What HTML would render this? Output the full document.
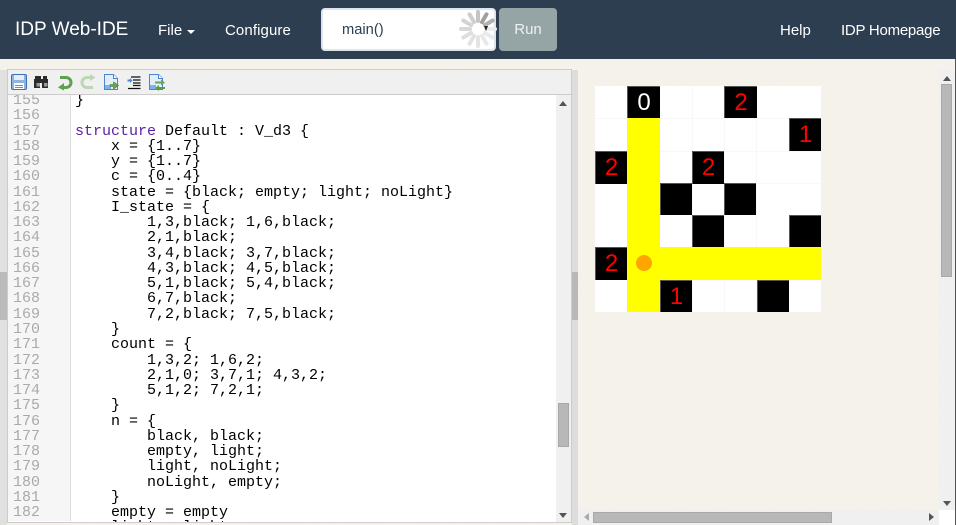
<!DOCTYPE html>
<html>
<head>
<meta charset="utf-8">
<style>
html,body{margin:0;padding:0;width:956px;height:525px;overflow:hidden;background:#f4f1ea;font-family:"Liberation Sans",sans-serif;}
.a{position:absolute;}
#nav{left:0;top:0;width:956px;height:59px;background:#2c3e50;}
.n{position:absolute;top:21px;color:#fff;font-size:15px;line-height:20px;white-space:nowrap;}
pre{margin:0;font-family:"Liberation Mono",monospace;font-size:15px;line-height:15.26px;}
.b{color:#000;}
.k{color:#5b1fa6;}
.c{position:absolute;width:33px;height:33px;box-sizing:border-box;}
.bk{background:#000;border-left:1px solid #555;border-top:1px solid #555;text-align:center;color:#f00;font-size:24px;line-height:31px;}
.y{background:#ff0;}
.th{background:#b8b8b8;border:1px solid #a9a9a9;box-sizing:border-box;}
</style>
</head>
<body>
<svg class="a" style="left:0;top:59px;" width="956" height="466">
<filter id="f" x="0" y="0" width="100%" height="100%"><feTurbulence type="fractalNoise" baseFrequency="0.55" numOctaves="2" seed="4"/><feColorMatrix type="matrix" values="0 0 0 0 0.88  0 0 0 0 0.86  0 0 0 0 0.80  1.6 0 0 0 -0.75"/></filter>
<rect width="956" height="466" fill="#f5f2eb"/>
<rect width="956" height="466" filter="url(#f)" opacity=".6"/>
</svg>

<div class="a" id="nav"></div>
<div class="n" style="left:15px;top:18px;font-size:19px;line-height:24px;">IDP Web-IDE</div>
<div class="n" style="left:158px;">File</div>
<div class="a" style="left:187px;top:30px;width:0;height:0;border-left:4px solid transparent;border-right:4px solid transparent;border-top:4px solid #fff;"></div>
<div class="n" style="left:225px;letter-spacing:.1px;">Configure</div>
<div class="n" style="left:780px;">Help</div>
<div class="n" style="left:841px;letter-spacing:-.25px;">IDP Homepage</div>

<div class="a" style="left:321px;top:8px;width:175px;height:43px;box-sizing:border-box;background:#fff;border:2px solid #dce4ec;border-radius:4px;"></div>
<div class="a" style="left:342px;top:20px;color:#2c3e50;font-size:14.7px;line-height:20px;">main()</div>
<svg class="a" style="left:458px;top:8.500px;" width="40" height="40" viewBox="-20 -20 40 40">
<g stroke-width="4" stroke-linecap="round">
<line x1="0" y1="-8" x2="0" y2="-17" stroke="#c4c4c4"/>
<line x1="4" y1="-6.9" x2="8.5" y2="-14.7" stroke="#a0a0a0"/>
<line x1="6.9" y1="-4" x2="14.7" y2="-8.500" stroke="#b0b0b0"/>
<line x1="8" y1="0" x2="17" y2="0" stroke="#ececec"/>
<line x1="6.9" y1="4" x2="14.7" y2="8.500" stroke="#eaeaea"/>
<line x1="4" y1="6.9" x2="8.5" y2="14.7" stroke="#e8e8e8"/>
<line x1="0" y1="8" x2="0" y2="17" stroke="#e4e4e4"/>
<line x1="-4" y1="6.9" x2="-8.5" y2="14.7" stroke="#e2e2e2"/>
<line x1="-6.9" y1="4" x2="-14.7" y2="8.500" stroke="#dedede"/>
<line x1="-8" y1="0" x2="-17" y2="0" stroke="#d8d8d8"/>
<line x1="-6.9" y1="-4" x2="-14.7" y2="-8.500" stroke="#d4d4d4"/>
<line x1="-4" y1="-6.9" x2="-8.5" y2="-14.7" stroke="#cecece"/>
</g>
</svg>
<div class="a" style="left:484px;top:26px;width:0;height:0;border-left:2.500px solid transparent;border-right:2.500px solid transparent;border-top:5px solid #222;"></div>
<div class="a" style="left:499px;top:8px;width:58px;height:43px;background:#95a5a6;border-radius:4px;color:#ecf0f1;font-size:15px;line-height:44px;text-align:center;">Run</div>

<!-- left splitter -->
<div class="a" style="left:0;top:70px;width:7px;height:455px;background:#e0e0e0;"></div>
<div class="a" style="left:0;top:272px;width:7px;height:48px;background:#bbb;"></div>

<!-- editor -->
<div class="a" style="left:7px;top:69px;width:565px;height:454px;box-sizing:border-box;background:#fff;border:1px solid #ccc;overflow:hidden;">
<div class="a" style="left:0;top:0;width:563px;height:24px;background:#f0f0f0;border-bottom:1px solid #ccc;"></div>
<div class="a" style="left:0;top:25px;width:63px;height:426px;background:#f6f6f6;border-right:1px solid #ddd;box-sizing:border-box;overflow:hidden;">
<div class="a" style="left:0;top:0;width:62px;height:425px;overflow:hidden;">
<pre class="a" style="left:5px;top:-2px;color:#aaa;">155
156
157
158
159
160
161
162
163
164
165
166
167
168
169
170
171
172
173
174
175
176
177
178
179
180
181
182</pre>
</div>
</div>
<div class="a" style="left:63px;top:25px;width:485px;height:427px;overflow:hidden;">
<pre class="a b" style="left:4px;top:-2px;">}

<span class="k">structure</span> Default : V_d3 {
    x = {1..7}
    y = {1..7}
    c = {0..4}
    state = {black; empty; light; noLight}
    I_state = {
        1,3,black; 1,6,black;
        2,1,black;
        3,4,black; 3,7,black;
        4,3,black; 4,5,black;
        5,1,black; 5,4,black;
        6,7,black;
        7,2,black; 7,5,black;
    }
    count = {
        1,3,2; 1,6,2;
        2,1,0; 3,7,1; 4,3,2;
        5,1,2; 7,2,1;
    }
    n = {
        black, black;
        empty, light;
        light, noLight;
        noLight, empty;
    }
    empty = empty
    light = light</pre>
</div>
<div class="a" style="left:548px;top:25px;width:15px;height:427px;background:#f0f0f0;"></div>
<div class="a th" style="left:550px;top:333px;width:11px;height:44px;"></div>
<div class="a" style="left:551px;top:31px;width:0;height:0;border-left:4px solid transparent;border-right:4px solid transparent;border-bottom:5px solid #555;"></div>
<div class="a" style="left:551px;top:443px;width:0;height:0;border-left:4px solid transparent;border-right:4px solid transparent;border-top:5px solid #555;"></div>
<!-- toolbar icons -->
<svg class="a" style="left:-1px;top:0;" width="170" height="24" viewBox="7 70 170 24">
<!-- save -->
<rect x="11.5" y="74.5" width="15" height="15" rx="1.5" fill="#8db4e0" stroke="#3d6fb5"/>
<rect x="14" y="75" width="10" height="5" fill="#e4eefb"/>
<rect x="14" y="83" width="10" height="6" fill="#fff"/>
<rect x="15" y="85" width="8" height="1" fill="#6aa84f"/>
<rect x="15" y="87" width="8" height="1" fill="#6aa84f"/>
<!-- binoculars -->
<path d="M37 76h4v3h2v-3h4v3h1v9h-6v-5h-2v5h-6v-9h1v-3h2z" fill="#2b2b2b"/>
<rect x="36.500" y="83" width="3.500" height="3.500" fill="#999"/>
<rect x="44" y="83" width="3.500" height="3.500" fill="#999"/>
<!-- undo -->
<path d="M60 77.500h6a5 5 0 0 1 0 10h-4" fill="none" stroke="#5da04e" stroke-width="3"/>
<path d="M64 83l-6 4.500 6 3z" fill="#5da04e"/>
<!-- redo -->
<path d="M93 77.500h-6a5 5 0 0 0 0 10h6" fill="none" stroke="#bcd6b6" stroke-width="3"/>
<path d="M90 74l5.500 3.500-5.500 3.500z" fill="#bcd6b6"/>
<!-- file arrow -->
<path d="M104.500 74.500h9l4 4v11h-13z" fill="#e4eefb" stroke="#4a86cf"/>
<path d="M113.500 74.500v4h4" fill="#fff" stroke="#4a86cf"/>
<rect x="105" y="85" width="6" height="4" fill="#7fb0ea"/>
<path d="M110 84.500h3.500v-2.500l5 3.500-5 3.500v-2.500h-3.500z" fill="#6aa84f" stroke="#3f7f2f" stroke-width=".6"/>
<!-- indent -->
<path d="M131 77h9.500M133 80h7.500M133 83h7.500M133 85.500h7.500M128 88.500h12.500" stroke="#111" stroke-width="1.200" fill="none"/>
<path d="M127.500 79.500h2.500v-1.500l2.500 2.500-2.500 2.500v-1.500h-2.500z" fill="#4a86cf"/>
<!-- file refresh -->
<path d="M149.500 74.500h9l4 4v11h-13z" fill="#e4eefb" stroke="#4a86cf"/>
<path d="M158.500 74.500v4h4" fill="#fff" stroke="#4a86cf"/>
<rect x="150" y="85" width="6" height="4" fill="#7fb0ea"/>
<path d="M155 81.500h6v-2l4 3-4 3v-2h-6z" fill="#6aa84f"/>
<path d="M165 87h-6v-2l-4 3 4 3v-2h6z" fill="#5d9b45"/>
</svg>
</div>

<!-- middle splitter -->
<div class="a" style="left:572px;top:70px;width:6px;height:455px;background:#ddd;"></div>
<div class="a" style="left:572px;top:272px;width:6px;height:48px;background:#b8b8b8;"></div>

<!-- board -->
<div class="a" style="left:595px;top:86px;width:226px;height:226px;background:#fff;background-image:linear-gradient(#f8f8f8,#f8f8f8),linear-gradient(#f8f8f8,#f8f8f8),linear-gradient(#f8f8f8,#f8f8f8),linear-gradient(#f8f8f8,#f8f8f8),linear-gradient(#f8f8f8,#f8f8f8),linear-gradient(#f8f8f8,#f8f8f8);background-size:1px 226px,1px 226px,1px 226px,226px 1px,226px 1px,226px 1px;background-position:97px 0,129px 0,161px 0,0 32px,0 65px,0 97px;background-repeat:no-repeat;"></div>
<div class="a y" style="left:627px;top:118px;width:33px;height:194px;"></div>
<div class="a y" style="left:627px;top:247px;width:194px;height:33px;"></div>
<div class="c bk" style="left:627px;top:86px;height:32px;color:#fff;">0</div>
<div class="c bk" style="left:724px;top:86px;height:32px;">2</div>
<div class="c bk" style="left:789px;top:118px;width:32px;">1</div>
<div class="c bk" style="left:595px;top:151px;width:32px;">2</div>
<div class="c bk" style="left:692px;top:151px;width:32px;">2</div>
<div class="c bk" style="left:660px;top:183px;width:32px;height:32px;"></div>
<div class="c bk" style="left:724px;top:183px;width:32px;height:32px;"></div>
<div class="c bk" style="left:692px;top:215px;width:32px;height:32px;"></div>
<div class="c bk" style="left:789px;top:215px;width:32px;height:32px;"></div>
<div class="c bk" style="left:595px;top:247px;width:32px;">2</div>
<div class="c bk" style="left:660px;top:280px;width:32px;height:32px;">1</div>
<div class="c bk" style="left:757px;top:280px;width:32px;height:32px;"></div>
<div class="a" style="left:636px;top:255px;width:16px;height:16px;border-radius:50%;background:#ffa500;"></div>

<!-- right scrollbars -->
<div class="a" style="left:939px;top:70px;width:16px;height:440px;background:#f0f0f0;"></div>
<div class="a" style="left:955px;top:59px;width:1px;height:466px;background:#555;"></div>
<div class="a th" style="left:941px;top:84px;width:11px;height:193px;"></div>
<div class="a" style="left:943px;top:76px;width:0;height:0;border-left:4px solid transparent;border-right:4px solid transparent;border-bottom:5px solid #555;"></div>
<div class="a" style="left:943px;top:501px;width:0;height:0;border-left:4px solid transparent;border-right:4px solid transparent;border-top:5px solid #555;"></div>
<div class="a" style="left:578px;top:510px;width:361px;height:15px;background:#f0f0f0;"></div>
<div class="a" style="left:939px;top:510px;width:16px;height:15px;background:#fff;"></div>
<div class="a th" style="left:593px;top:512px;width:239px;height:11px;"></div>
<div class="a" style="left:584px;top:513px;width:0;height:0;border-top:4px solid transparent;border-bottom:4px solid transparent;border-right:5px solid #aaa;"></div>
<div class="a" style="left:929px;top:513px;width:0;height:0;border-top:4px solid transparent;border-bottom:4px solid transparent;border-left:5px solid #555;"></div>
</body>
</html>
